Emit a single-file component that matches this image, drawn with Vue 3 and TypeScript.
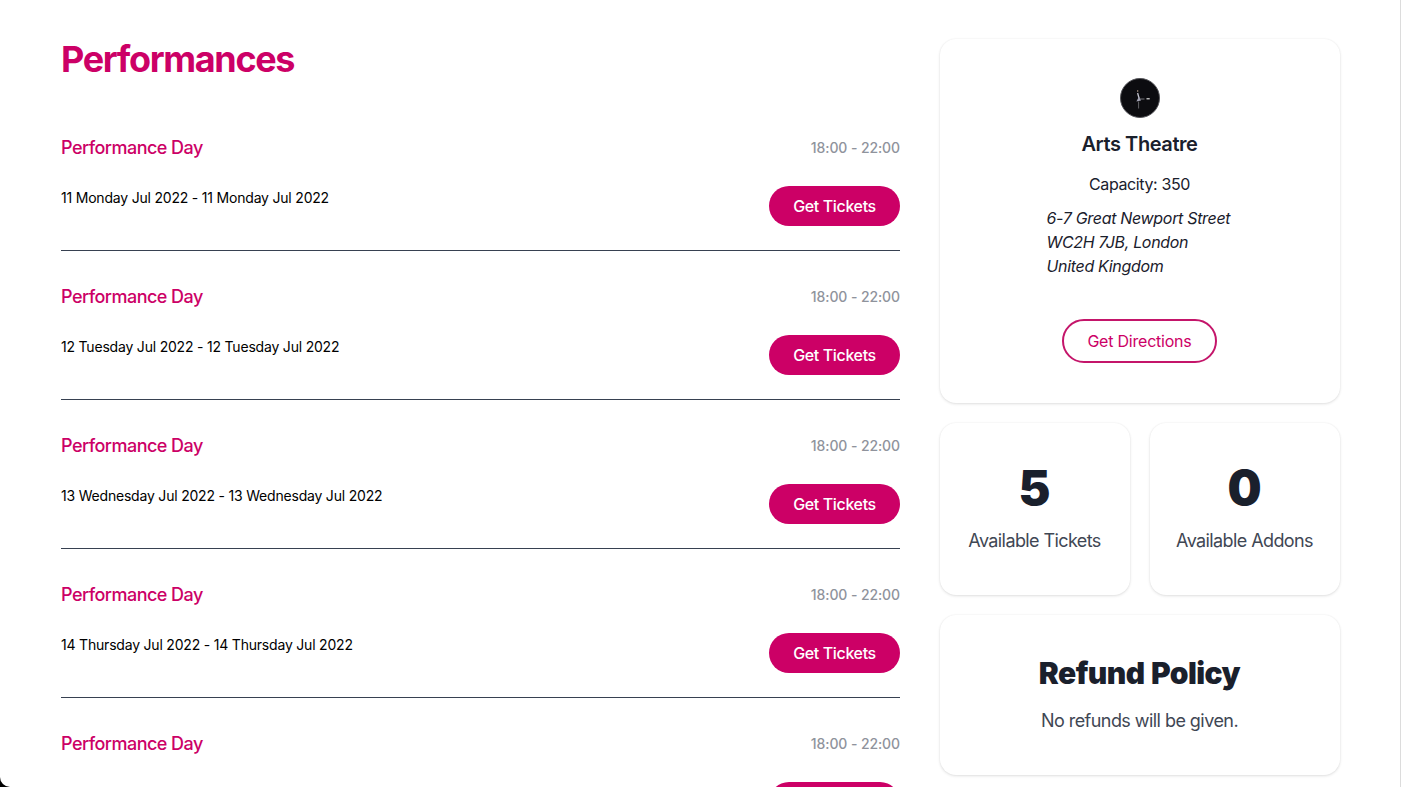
<script setup lang="ts">
interface Performance { date: string }
const performances: Performance[] = [
  { date: '11 Monday Jul 2022 - 11 Monday Jul 2022' },
  { date: '12 Tuesday Jul 2022 - 12 Tuesday Jul 2022' },
  { date: '13 Wednesday Jul 2022 - 13 Wednesday Jul 2022' },
  { date: '14 Thursday Jul 2022 - 14 Thursday Jul 2022' },
  { date: '15 Friday Jul 2022 - 15 Friday Jul 2022' },
]
</script>

<template>
  <div class="window">
    <div class="page">
      <main class="main">
        <h1 class="heading">Performances</h1>
        <ul class="list">
          <li v-for="p in performances" :key="p.date" class="row">
            <div class="row-top">
              <h2 class="row-title">Performance Day</h2>
              <span class="row-time">18:00 - 22:00</span>
            </div>
            <div class="row-bottom">
              <p class="row-date">{{ p.date }}</p>
              <button class="btn-primary">Get Tickets</button>
            </div>
          </li>
        </ul>
      </main>
      <aside class="side">
        <section class="card venue">
          <svg class="avatar" viewBox="0 0 40 40" width="40" height="40" aria-hidden="true">
            <circle cx="20" cy="20" r="19.5" fill="#0c0c10" stroke="#55555a" stroke-width="1" />
            <circle cx="17.7" cy="13" r=".7" fill="#c9ad9a" />
            <path d="M17.6 15l1.4 5" stroke="#c4c4ce" stroke-width="1.3" />
            <path d="M19 18.5l-2.6 5 4.6-1z" fill="#a3a3b4" />
            <path d="M18.6 23.5v7" stroke="#77777e" stroke-width=".8" />
            <path d="M20 21h4.5" stroke="#8f8f97" stroke-width=".8" />
            <path d="M26.5 20.8h3.2" stroke="#f2f2f2" stroke-width="1.1" />
          </svg>
          <h2 class="venue-name">Arts Theatre</h2>
          <p class="venue-capacity">Capacity: 350</p>
          <address class="venue-address">
            <span>6-7 Great Newport Street</span>
            <span>WC2H 7JB, London</span>
            <span>United Kingdom</span>
          </address>
          <button class="btn-outline">Get Directions</button>
        </section>
        <div class="stats">
          <section class="card stat">
            <strong class="stat-value">5</strong>
            <span class="stat-label">Available Tickets</span>
          </section>
          <section class="card stat">
            <strong class="stat-value">0</strong>
            <span class="stat-label">Available Addons</span>
          </section>
        </div>
        <section class="card refund">
          <h2 class="refund-title">Refund Policy</h2>
          <p class="refund-text">No refunds will be given.</p>
        </section>
      </aside>
    </div>
  </div>
</template>

<style>
html, body { margin: 0; height: 100%; overflow: hidden; background: #000; }
</style>

<style scoped>
.window {
  height: 787px;
  width: 1401px;
  overflow: hidden;
  background: #000;
  font-family: Inter, "Liberation Sans", sans-serif;
}
.page {
  box-sizing: border-box;
  height: 787px;
  background: #fff;
  border-bottom-left-radius: 10px;
  border-right: 1px solid #dcdcdc;
  padding: 39px 60px 0 61px;
  display: flex;
  gap: 40px;
  overflow: hidden;
}
.main { width: 839px; flex: none; }
.heading {
  margin: 0;
  font-size: 36px;
  line-height: 40px;
  font-weight: 700;
  color: #cc0066;
  letter-spacing: -1.35px;
}
.list { list-style: none; margin: 23px 0 0; padding: 0; }
.row {
  box-sizing: border-box;
  height: 149px;
  padding-top: 32px;
  border-bottom: 1px solid #374151;
}
.row-top { display: flex; justify-content: space-between; align-items: center; height: 28px; }
.row-title { margin: 0; font-size: 18px; line-height: 28px; font-weight: 500; color: #cc0066; letter-spacing: -0.53px; }
.row-time { font-size: 14px; line-height: 20px; font-weight: 500; color: #8f939c; letter-spacing: -0.1px; }
.row-bottom { display: flex; justify-content: space-between; align-items: flex-start; margin-top: 24px; }
.row-date { margin: 2px 0 0; font-size: 14px; line-height: 20px; color: #000; letter-spacing: -0.2px; }
.btn-primary {
  height: 40px;
  width: 131px;
  border: 0;
  border-radius: 20px;
  background: #cc0066;
  color: #fff;
  font: 500 16px/24px Inter, "Liberation Sans", sans-serif;
  letter-spacing: -0.36px;
}
.side { width: 400px; flex: none; display: flex; flex-direction: column; gap: 20px; }
.card {
  box-sizing: border-box;
  background: #fff;
  border-radius: 16px;
  box-shadow: 0 1px 3px rgba(0, 0, 0, 0.12), 0 0 2px rgba(0, 0, 0, 0.05);
}
.venue {
  height: 364px;
  padding: 39px 1px 0 0;
  display: flex;
  flex-direction: column;
  align-items: center;
}
.avatar { display: block; margin-left: 1px; }
.venue-name { margin: 12px 0 0; font-size: 20px; line-height: 28px; font-weight: 600; color: #1a202c; letter-spacing: -0.42px; }
.venue-capacity { margin: 14px 0 0; font-size: 16px; line-height: 24px; color: #1a202c; letter-spacing: -0.38px; }
.venue-address {
  margin: 10px 0 0;
  width: 186px;
  font-size: 16px;
  line-height: 24px;
  font-style: italic;
  color: #1a202c;
  display: flex;
  flex-direction: column;
  white-space: nowrap;
  letter-spacing: -0.32px;
}
.btn-outline {
  margin-top: 41px;
  height: 44px;
  width: 155px;
  border: 2px solid #c4156a;
  border-radius: 22px;
  background: #fff;
  color: #cc0066;
  font: 400 16px/24px Inter, "Liberation Sans", sans-serif;
  letter-spacing: -0.22px;
}
.stats { display: flex; gap: 20px; }
.stat {
  flex: 1;
  height: 172px;
  padding: 41px 1px 0 0;
  display: flex;
  flex-direction: column;
  align-items: center;
}
.stat-value { font-size: 48px; line-height: 48px; font-weight: 900; color: #1a202c; }
.stat-label { margin-top: 15px; font-size: 18px; line-height: 28px; color: #3f4754; letter-spacing: -0.6px; }
.refund {
  height: 160px;
  padding: 40px 1px 0 0;
  display: flex;
  flex-direction: column;
  align-items: center;
}
.refund-title { margin: 0; font-size: 30px; line-height: 36px; font-weight: 900; color: #1a202c; letter-spacing: -0.55px; word-spacing: 1px; }
.refund-text { margin: 16px 0 0; font-size: 18px; line-height: 28px; color: #3f4754; letter-spacing: -0.55px; }
</style>
